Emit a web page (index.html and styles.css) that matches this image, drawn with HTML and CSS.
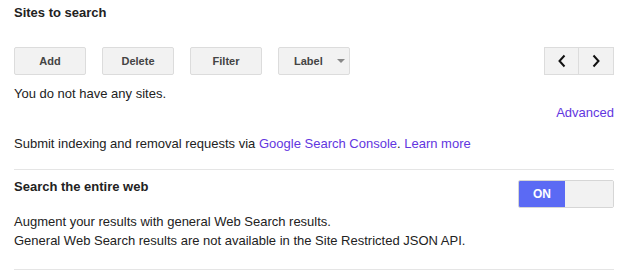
FILE: index.html
```html
<!DOCTYPE html>
<html lang="en">
<head>
  <meta charset="UTF-8">
  <title>Sites to search</title>
  <link rel="stylesheet" href="styles.css">
</head>
<body>
  <div class="panel">
    <h2 class="section-title">Sites to search</h2>

    <div class="toolbar">
      <button class="btn">Add</button>
      <button class="btn">Delete</button>
      <button class="btn">Filter</button>
      <button class="btn btn-menu">Label <span class="caret"></span></button>
      <div class="pager">
        <button class="pager-btn" aria-label="Previous">
          <svg width="10" height="14" viewBox="0 0 10 14"><path d="M7.5 1.5 L2.5 7 L7.5 12.5" fill="none" stroke="#111" stroke-width="2"/></svg>
        </button>
        <button class="pager-btn" aria-label="Next">
          <svg width="10" height="14" viewBox="0 0 10 14"><path d="M2.5 1.5 L7.5 7 L2.5 12.5" fill="none" stroke="#111" stroke-width="2"/></svg>
        </button>
      </div>
    </div>

    <p class="empty">You do not have any sites.</p>
    <div class="advanced"><a href="#">Advanced</a></div>

    <p class="note">Submit indexing and removal requests via <a href="#">Google Search Console</a>. <a href="#">Learn more</a></p>

    <hr class="divider">

    <div class="setting-row">
      <h2 class="section-title">Search the entire web</h2>
      <div class="toggle">
        <span class="toggle-on">ON</span>
        <span class="toggle-off"></span>
      </div>
    </div>
    <p class="desc">Augment your results with general Web Search results.<br>General Web Search results are not available in the Site Restricted JSON API.</p>

    <hr class="divider divider-last">
  </div>
</body>
</html>
```

FILE: styles.css
```css
body {
  margin: 0;
  background: #fff;
  font-family: "Liberation Sans", Arial, sans-serif;
  font-size: 13px;
  line-height: 16px;
  color: #222;
}

.panel {
  padding: 5px 14px 0;
}

.section-title {
  margin: 0;
  font-size: 13px;
  font-weight: bold;
  line-height: 16px;
  color: #222;
}

a {
  color: #6236e0;
  text-decoration: none;
}

.toolbar {
  display: flex;
  gap: 16px;
  margin-top: 26px;
}

.btn {
  width: 72px;
  height: 28px;
  padding: 0;
  background: #f2f2f2;
  border: 1px solid #dcdcdc;
  border-radius: 2px;
  font-family: inherit;
  font-size: 11px;
  font-weight: bold;
  color: #444;
}

.btn-menu {
  display: flex;
  align-items: center;
  justify-content: flex-start;
  padding-left: 15px;
}

.caret {
  margin-left: 14px;
  border-left: 4px solid transparent;
  border-right: 4px solid transparent;
  border-top: 4px solid #888;
}

.pager {
  display: flex;
  margin-left: auto;
}

.pager-btn {
  width: 35px;
  height: 28px;
  padding: 0;
  display: flex;
  align-items: center;
  justify-content: center;
  background: #f2f2f2;
  border: 1px solid #dcdcdc;
}

.pager-btn + .pager-btn {
  border-left: none;
}

.empty {
  margin: 11px 0 0;
}

.advanced {
  margin-top: 3px;
  text-align: right;
}

.note {
  margin: 15px 0 0;
}

.divider {
  margin: 17px 0 0;
  border: none;
  border-top: 1px solid #e5e5e5;
}

.setting-row {
  display: flex;
  justify-content: space-between;
  align-items: flex-start;
  margin-top: 9px;
}

.toggle {
  display: flex;
  width: 96px;
  height: 28px;
  margin-top: 1px;
  box-sizing: border-box;
  border: 1px solid #d6d6d6;
  border-radius: 2px;
  overflow: hidden;
}

.toggle-on {
  width: 46px;
  background: #5b6af4;
  color: #fff;
  font-size: 12px;
  font-weight: bold;
  line-height: 26px;
  text-align: center;
}

.toggle-off {
  flex: 1;
  background: #f2f2f2;
}

.desc {
  margin: 4px 0 0;
  line-height: 19px;
}

.divider-last {
  margin-top: 19px;
}
```
